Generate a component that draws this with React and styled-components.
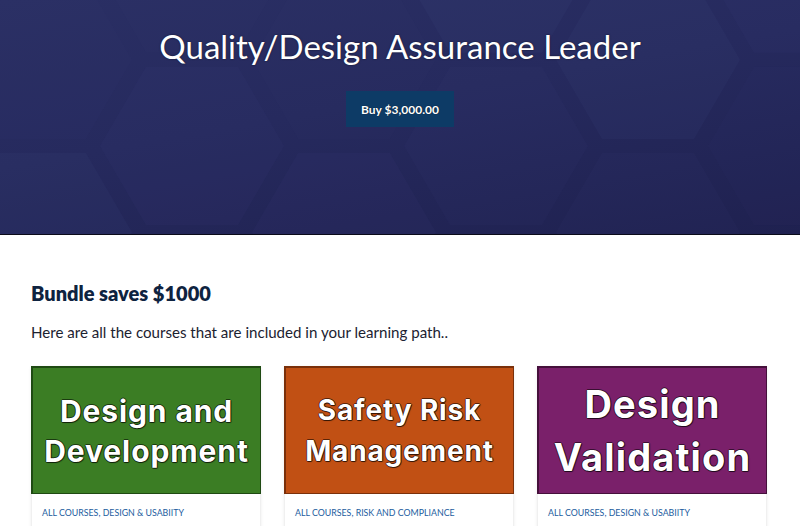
import React from "react";
import styled, { createGlobalStyle } from "styled-components";

const GlobalStyle = createGlobalStyle`
  html, body { margin: 0; padding: 0; background: #ffffff; }
  body { font-family: Lato, "Noto Sans", sans-serif; -webkit-font-smoothing: antialiased; }
  * { box-sizing: border-box; }
`;

const Hero = styled.header`
  position: relative;
  height: 235px;
  overflow: hidden;
  background: linear-gradient(170deg, #2a2f64 0%, #262a5e 45%, #1f2150 100%);
  border-bottom: 1px solid #0b0b1a;
  display: flex;
  flex-direction: column;
  align-items: center;
  padding-top: 26px;
`;

const HexLayer = styled.svg`
  position: absolute;
  inset: 0;
  width: 100%;
  height: 100%;
  pointer-events: none;
`;

const Title = styled.h1`
  position: relative;
  margin: 0;
  font-family: Lato, sans-serif;
  font-weight: 400;
  font-size: 33px;
  line-height: 40px;
  color: #ffffff;
  text-shadow: 0 0 2px rgba(0, 0, 0, 0.6);
`;

const BuyButton = styled.button`
  position: relative;
  margin-top: 25px;
  height: 36px;
  padding: 0 15px;
  border: none;
  background: #0d3b66;
  color: #ffffff;
  font-family: Lato, sans-serif;
  font-weight: 700;
  font-size: 12px;
  text-shadow: 0 0 1px rgba(0, 0, 0, 0.7);
  cursor: pointer;
`;

const Main = styled.main`
  padding: 46px 31px 0 31px;
`;

const Heading = styled.h2`
  margin: 0;
  font-family: Lato, sans-serif;
  font-weight: 800;
  font-size: 20px;
  line-height: 24px;
  color: #0e2340;
`;

const Intro = styled.p`
  margin: 18px 0 0 0;
  font-family: Lato, sans-serif;
  font-size: 15.1px;
  line-height: 18px;
  color: #1c2230;
`;

const Grid = styled.div`
  margin-top: 25px;
  display: grid;
  grid-template-columns: repeat(3, 230px);
  column-gap: 23px;
`;

const Card = styled.article`
  background: #ffffff;
  box-shadow: 0 1px 3px rgba(0, 0, 0, 0.08);
  border: 1px solid #f0f0f0;
  border-top: none;
`;

const CardImage = styled.div`
  height: 128px;
  margin: 0 -1px;
  background: ${(p) => p.$bg};
  border: 1px solid ${(p) => p.$edge};
  border-top-width: 2px;
  border-left-width: 2px;
  display: flex;
  flex-direction: column;
  align-items: center;
  justify-content: center;
`;

const ImageLine = styled.span`
  font-family: Inter, "Noto Sans", sans-serif;
  font-weight: 700;
  font-size: ${(p) => p.$size}px;
  line-height: ${(p) => p.$lh}px;
  letter-spacing: 0.03em;
  color: #ffffff;
  white-space: nowrap;
  text-shadow:
    1px 0 0 rgba(0, 0, 0, 0.55),
    -1px 0 0 rgba(0, 0, 0, 0.55),
    0 1px 0 rgba(0, 0, 0, 0.55),
    0 -1px 0 rgba(0, 0, 0, 0.55),
    1px 1px 1px rgba(0, 0, 0, 0.4);
`;

const CardBody = styled.div`
  padding: 13px 10px 40px 10px;
`;

const Category = styled.div`
  font-family: Lato, sans-serif;
  font-size: 8.8px;
  line-height: 11px;
  text-transform: uppercase;
  color: #1b5c9e;
`;

const hexPoints = (cx, cy, r) => {
  const pts = [];
  for (let i = 0; i < 6; i++) {
    const a = (Math.PI / 180) * (60 * i);
    pts.push(`${(cx + r * Math.cos(a)).toFixed(1)},${(cy + r * Math.sin(a)).toFixed(1)}`);
  }
  return pts.join(" ");
};

const Hexagons = () => {
  const r = 92;
  const w = r * 1.5 + 14;
  const h = r * Math.sqrt(3) + 14;
  const cells = [];
  for (let c = -1; c < 7; c++) {
    for (let row = -1; row < 3; row++) {
      const cx = 40 + c * w;
      const cy = row * h + (c % 2 === 0 ? 0 : h / 2) + 60;
      const key = `${c}-${row}`;
      const op = ((c * 7 + row * 3 + 11) % 5) * 0.012 + 0.02;
      cells.push(
        <polygon key={key} points={hexPoints(cx, cy, r)} fill="#5a64a8" opacity={op} />
      );
    }
  }
  return (
    <HexLayer viewBox="0 0 800 235" preserveAspectRatio="none" aria-hidden="true">
      {cells}
    </HexLayer>
  );
};

const courses = [
  {
    lines: ["Design and", "Development"],
    size: 30,
    lh: 40,
    bg: "#3b7d24",
    edge: "#1f4a13",
    category: "All Courses, Design & Usabiity",
  },
  {
    lines: ["Safety Risk", "Management"],
    size: 28,
    lh: 41,
    bg: "#c15014",
    edge: "#7a300a",
    category: "All Courses, Risk and Compliance",
  },
  {
    lines: ["Design", "Validation"],
    size: 38,
    lh: 53,
    bg: "#7a206a",
    edge: "#45103b",
    category: "All Courses, Design & Usabiity",
  },
];

export default function App() {
  return (
    <>
      <GlobalStyle />
      <Hero>
        <Hexagons />
        <Title>Quality/Design Assurance Leader</Title>
        <BuyButton>Buy $3,000.00</BuyButton>
      </Hero>
      <Main>
        <Heading>Bundle saves $1000</Heading>
        <Intro>Here are all the courses that are included in your learning path..</Intro>
        <Grid>
          {courses.map((c, i) => (
            <Card key={i}>
              <CardImage $bg={c.bg} $edge={c.edge}>
                {c.lines.map((l) => (
                  <ImageLine key={l} $size={c.size} $lh={c.lh}>
                    {l}
                  </ImageLine>
                ))}
              </CardImage>
              <CardBody>
                <Category>{c.category}</Category>
              </CardBody>
            </Card>
          ))}
        </Grid>
      </Main>
    </>
  );
}
